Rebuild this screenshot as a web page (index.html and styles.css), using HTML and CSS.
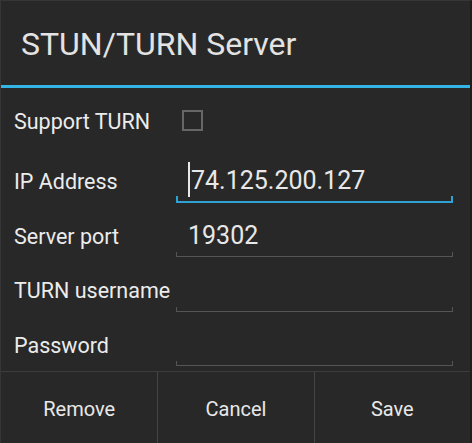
FILE: index.html
```html
<!DOCTYPE html>
<html>
<head>
<meta charset="utf-8">
<link rel="stylesheet" href="styles.css">
</head>
<body>
<div class="dialog">
  <div class="title">STUN/TURN Server</div>
  <div class="divider"></div>
  <div class="form">
    <div class="row row-check">
      <span class="label">Support TURN</span>
      <span class="checkbox"></span>
    </div>
    <div class="row">
      <span class="label">IP Address</span>
      <div class="field focused"><span class="cursor"></span>74.125.200.127</div>
    </div>
    <div class="row">
      <span class="label">Server port</span>
      <div class="field">19302</div>
    </div>
    <div class="row">
      <span class="label">TURN username</span>
      <div class="field"></div>
    </div>
    <div class="row">
      <span class="label">Password</span>
      <div class="field"></div>
    </div>
  </div>
  <div class="buttons">
    <button class="btn">Remove</button>
    <button class="btn">Cancel</button>
    <button class="btn">Save</button>
  </div>
</div>
</body>
</html>
```
FILE: styles.css
```css
html, body {
  margin: 0;
  padding: 0;
  background: #282828;
}
body {
  font-family: Roboto, "Liberation Sans", sans-serif;
  color: #e8e8e8;
}
.dialog {
  width: 472px;
  height: 443px;
  box-sizing: border-box;
  display: flex;
  flex-direction: column;
  background: #282828;
  border-top: 1px solid #363636;
  border-left: 1px solid #363636;
  border-right: 2px solid #1d1d1d;
  overflow: hidden;
}
.title {
  height: 84px;
  box-sizing: border-box;
  padding: 25px 0 0 20px;
  font-size: 32px;
  line-height: 36px;
  color: #e3e3e3;
}
.divider {
  height: 3px;
  background: #33b5e5;
}
.form {
  flex: 1;
  min-height: 0;
  overflow: hidden;
  padding: 22px 0 0 13px;
  box-sizing: border-box;
}
.row {
  display: flex;
  align-items: flex-start;
  height: 54.5px;
}
.row:last-child {
  height: auto;
}
.row-check {
  height: 56px;
}
.label {
  flex: none;
  width: 162px;
  margin-top: 4.2px;
  font-size: 21.5px;
  line-height: 24px;
  color: #ececec;
  white-space: nowrap;
}
.row-check .label {
  margin-top: 0;
}
.checkbox {
  flex: none;
  width: 17px;
  height: 17px;
  margin-left: 6px;
  border: 2px solid #666;
}
.field {
  flex: none;
  position: relative;
  width: 277px;
  height: 36.5px;
  box-sizing: border-box;
  padding: 0 0 6.5px 12px;
  font-size: 25px;
  line-height: 30px;
  color: #e8e8e8;
  display: flex;
  align-items: flex-start;
}
.field::after {
  content: "";
  position: absolute;
  left: 0;
  right: 0;
  bottom: 0;
  height: 4px;
  border: 1px solid #555;
  border-top: none;
}
.field.focused::after {
  height: 5px;
  border: 2px solid #2ea3d3;
  border-top: none;
}
.cursor {
  flex: none;
  width: 2px;
  height: 35px;
  margin-right: 1px;
  margin-top: -4px;
  background: #e8e8e8;
}
.buttons {
  flex: none;
  height: 72px;
  box-sizing: border-box;
  border-top: 1px solid #3c3c3c;
  display: grid;
  grid-template-columns: 1fr 1fr 1fr;
}
.btn {
  background: transparent;
  border: none;
  margin: 0;
  padding: 3px 0 0 0;
  font-family: inherit;
  font-size: 20px;
  color: #e8e8e8;
}
.btn + .btn {
  border-left: 1px solid #444;
}
```
